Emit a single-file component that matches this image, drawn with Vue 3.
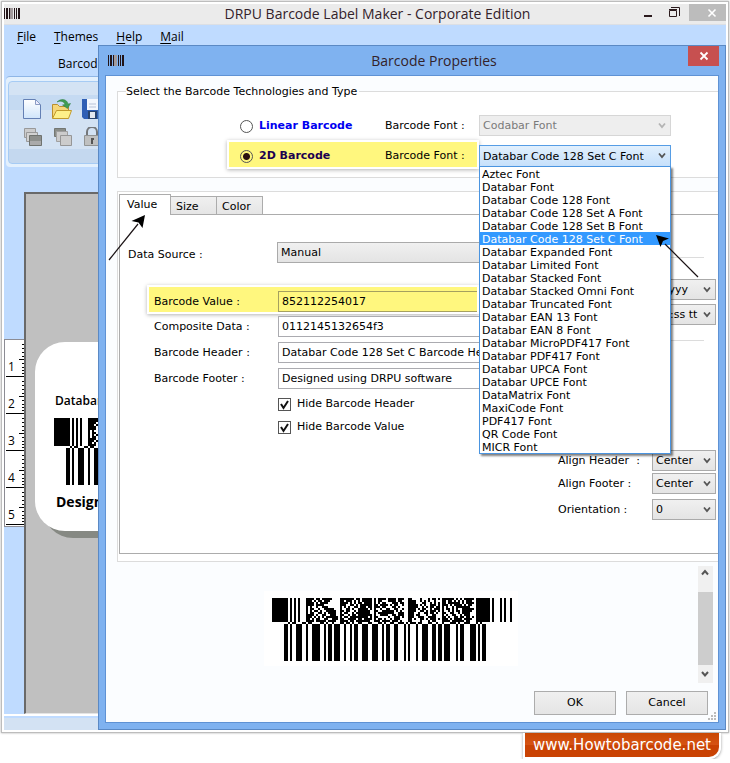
<script setup>
import { ref } from 'vue'

const fonts = [
  'Aztec Font', 'Databar Font', 'Databar Code 128 Font', 'Databar Code 128 Set A Font',
  'Databar Code 128 Set B Font', 'Databar Code 128 Set C Font', 'Databar Expanded Font',
  'Databar Limited Font', 'Databar Stacked Font', 'Databar Stacked Omni Font',
  'Databar Truncated Font', 'Databar EAN 13 Font', 'Databar EAN 8 Font',
  'Databar MicroPDF417 Font', 'Databar PDF417 Font', 'Databar UPCA Font',
  'Databar UPCE Font', 'DataMatrix Font', 'MaxiCode Font', 'PDF417 Font',
  'QR Code Font', 'MICR Font',
]
const kind = ref('2d')
const selected = ref('Databar Code 128 Set C Font')
const value = ref('852112254017')
const composite = ref('0112145132654f3')
const header = ref('Databar Code 128 Set C Barcode Header')
const footer = ref('Designed using DRPU software')
const hideHeader = ref(true)
const hideValue = ref(true)

// [start, width] in modules
const guards = [[0, 8], [9, 1], [11, 1], [13, 1], [102, 7], [110, 1], [114, 1], [116, 1], [119, 1]]
const linear = [
  [6, 2], [9, 1], [12, 3], [17, 1], [20, 4], [26, 1], [28, 2], [31, 3], [36, 1], [39, 1],
  [41, 2], [45, 3], [50, 3], [55, 1], [57, 2], [61, 2], [66, 1], [68, 1], [72, 1], [75, 3],
  [80, 2], [83, 2], [86, 3], [92, 1], [94, 2], [99, 3], [103, 1], [105, 2],
]
const matrix = [
  '####.##.#####... #######.##.##### #.####.####.### ##....#...#.##.# ######.#.#.#####',
  '###.#.##.###.... ##.###.#.#.##### #.##...####.##. ####..#.#.#..#.. ##.##.#.#.#.###.',
  '####.#.####..... ####.#.#.##.#### #.#.##...###.## ####...##..#.#.# ##.######.#.####',
  '####.####....... ###..##.#.###### ##.####.#.##..# #####.#.#..###.# ###.#.####.#.##.',
  '#.#..#..###..... #.#.#..##.###.## ###.##...##.#.. #####..#.#.##.## #.#..#.#######..',
  '#.##..#..#####.. #..##.#..#####.# #..#..##..##..# ####.#.##..#.### #.##.#.#..######',
  '#.#.##.#..#####. ##.##..#.######. ##..######.#.#. ####..##.#.###.# #..#.#.##.#####.',
  '#.##..##.#.####. #.##..#.#######. #.########..### ###..#..##.##.#. ##..##..#.####..',
  '####.#..##..###. ##..#.##.####### #..####..##.### ###.##...#..##.. #.#..##..#.###..',
  '###.#.#.#.###### #.##.#########.# ##.....#..###.# ###..###..####.. ##.#..##.##.##.#',
  '##.#.##..##..### ##..####.##.#### #.##.#..#.###.. ##.#..##.#.###.# ###.#.####.####.',
  '####.#####.####. ####.##.#######. ###.####.###.#. ##....#...#.##.. ####.######.##..',
]
const starts = [17, 34, 51, 68, 85]
const unit = 2
const bar = (x, y, w, h) => `M${x} ${y}h${w}v${h}h${-w}z`

function barcodePath(lead) {
  const top = unit * (12 + lead)
  let d = guards.map(([x, w]) => bar(x * unit, 0, w * unit, top)).join('')
  if (lead) d += starts.map((x) => bar(x * unit, 0, 32, lead * unit)).join('')
  matrix.forEach((row, r) => {
    row.split(' ').forEach((block, b) => {
      ;[...block].forEach((c, i) => {
        if (c === '#') d += bar((starts[b] + i) * unit, (r + lead) * unit, unit, unit)
      })
    })
  })
  for (let i = 1; i < linear.length; i++) {
    const end = linear[i - 1][0] + linear[i - 1][1]
    d += bar(end * unit, top, (linear[i][0] - end) * unit, unit)
  }
  d += linear.map(([x, w]) => bar(x * unit, top + unit, w * unit, 37)).join('')
  return d
}
const previewPath = barcodePath(0)
const labelPath = barcodePath(2)
</script>

<template>
  <div class="frame">
    <main class="stage">
      <div class="app">
        <header class="app-title">
          <svg class="logo" width="16" height="11" shape-rendering="crispEdges"><path d="M0 0h1v11H0zM2 0h2v11H2zM5 0h1v11H5zM10 0h1v11h-1zM12 0h1v11h-1zM14 0h2v11h-2z" fill="#221418" /><path d="M6 0h3v11H6z" fill="#a29a9c" /></svg>
          <h1>DRPU Barcode Label Maker - Corporate Edition</h1>
          <div class="win-buttons">
            <button aria-label="Minimize"><svg width="14" height="14"><path d="M3 8h8v2H3z" fill="#2b1a1d" /></svg></button>
            <button aria-label="Restore"><svg width="14" height="14" fill="none" stroke="#2b1a1d"><path d="M4 .5h8.500V9M2.500 3.500h7v6h-7zM2 2.500h8" /></svg></button>
            <button class="off" aria-label="Close"><svg width="14" height="14"><path d="M3.500 3.500l7 7M10.500 3.500l-7 7" stroke="#fff" stroke-width="1.600" /></svg></button>
          </div>
        </header>
        <nav class="menu">
          <a href="#"><u>F</u>ile</a><a href="#"><u>T</u>hemes</a><a href="#"><u>H</u>elp</a><a href="#"><u>M</u>ail</a>
        </nav>
        <div class="ribbon-tab">Barcode Settings</div>
        <div class="ribbon">
          <div class="ribbon-inner">
            <button aria-label="New">
              <svg width="20" height="20"><defs><linearGradient id="pg" x2="0" y2="1"><stop stop-color="#fff" /><stop offset="1" stop-color="#cfe5fb" /></linearGradient></defs><path d="M1.500.5h12l5 5v14h-17z" fill="url(#pg)" stroke="#6480b4" /><path d="M13.500.5v5h5z" fill="#eef" stroke="#8a9cc4" /></svg>
            </button>
            <button aria-label="Open">
              <svg width="20" height="20"><path d="M.5 19V5.500h5l2 2h9V19z" fill="#f5d77a" stroke="#b98f2e" /><path d="M.5 19.500l4-8h15l-3 8z" fill="#fdf08a" stroke="#c19a2c" /><path d="M5 3C9-1 15 0 16 5l2.500-.5-3 5-5-3.500 2.500-.5C12 2 8 1.500 5 3z" fill="#3f9d54" stroke="#2a7a3c" stroke-width=".5" /></svg>
            </button>
            <button aria-label="Save">
              <svg width="20" height="20"><path d="M0 0h20v20H2l-2-2z" fill="#2f5fb5" /><path d="M5 0h11v11H5z" fill="#f4f7fd" /><path d="M7 5h7M7 8h7" stroke="#b9c3d8" /><path d="M6 12h9v8H6z" fill="#28446f" /><path d="M8 13h5v6H8z" fill="#e4e8ef" /></svg>
            </button>
            <button aria-label="Send to back">
              <svg width="20" height="20"><path d="M2.500 1.500h11v9h-11z" fill="#ccc" stroke="#999" /><path d="M4.500 5.500h11v9h-11z" fill="#d2d2d2" stroke="#999" /><path d="M7.500 8.500h12v10h-12z" fill="#8d8f8c" stroke="#70736f" /><path d="M8 14h11v4H8z" fill="#aaa" /></svg>
            </button>
            <button aria-label="Bring to front">
              <svg width="20" height="20"><path d="M2.500 1.500h11v8h-11z" fill="#8a8d88" stroke="#747772" /><path d="M4.500 4.500h11v10h-11z" fill="#ccc" stroke="#a0a0a0" /><path d="M8.500 8.500h11v10h-11z" fill="#ccc" stroke="#969696" /></svg>
            </button>
            <button aria-label="Lock">
              <svg width="20" height="20"><path d="M5 9V5a5 5 0 0 1 10 0v4" fill="none" stroke="#74777a" stroke-width="2" /><path d="M2.500 8.500h15v10h-15z" fill="#bfc0c0" stroke="#929494" /><path d="M9 11h3v2h-1v4H9v-4z" fill="#555" /></svg>
            </button>
          </div>
        </div>
        <div class="work">
          <div class="rail">
            <div class="ruler">
              <div v-for="n in 5" :key="n" class="inch">
                <span>{{ n }}</span>
                <svg width="5" height="36" stroke="#000" shape-rendering="crispEdges"><path d="M3 4.500h2M3 8.500h2M3 12.500h2M3 16.500h2M0 19.500h5M3 23.500h2M3 27.500h2M3 30.500h2M3 33.500h2" /></svg>
              </div>
            </div>
          </div>
          <div class="canvas">
            <div class="card">
              <p class="card-head">Databar Code 128 Set C</p>
              <svg width="240" height="67" shape-rendering="crispEdges"><path :d="labelPath" /></svg>
              <p class="card-foot">Designed using DRPU</p>
            </div>
          </div>
        </div>
        <footer class="status"></footer>
      </div>

      <section class="dialog" aria-label="Barcode Properties">
        <header class="dlg-title">
          <svg class="logo" width="16" height="11" shape-rendering="crispEdges"><path d="M0 0h1v11H0zM2 0h2v11H2zM5 0h1v11H5zM10 0h1v11h-1zM12 0h1v11h-1zM14 0h2v11h-2z" fill="#221418" /><path d="M6 0h3v11H6z" fill="#a29a9c" /></svg>
          <h2>Barcode Properties</h2>
          <button class="close" aria-label="Close dialog"><svg width="14" height="14"><path d="M3.500 3.500l7 7M10.500 3.500l-7 7" stroke="#fff" stroke-width="1.800" /></svg></button>
        </header>

        <div class="client">
          <fieldset class="tech">
            <legend>Select the Barcode Technologies and Type</legend>
            <div class="tech-row">
              <div class="pick">
                <label class="kind"><input v-model="kind" type="radio" name="kind" value="linear" /><b>Linear Barcode</b></label>
                <label for="f1">Barcode Font :</label>
              </div>
              <div class="combo">
                <select id="f1" disabled><option>Codabar Font</option></select>
                <svg class="chev" width="8" height="8"><path d="M1 1.500l3 3.500 3-3.500" /></svg>
              </div>
            </div>
            <div class="tech-row">
              <div class="pick hl">
                <label class="kind on"><input v-model="kind" type="radio" name="kind" value="2d" /><b>2D Barcode</b></label>
                <label for="f2">Barcode Font :</label>
              </div>
              <div class="combo open">
                <select id="f2" v-model="selected"><option v-for="f in fonts" :key="f">{{ f }}</option></select>
                <svg class="chev" width="8" height="8"><path d="M1 1.500l3 3.500 3-3.500" /></svg>
                <ul class="list" role="listbox">
                  <li v-for="f in fonts" :key="f" role="option" :class="{ active: f === selected }" @click="selected = f">{{ f }}</li>
                </ul>
              </div>
            </div>
          </fieldset>

          <div class="book">
            <div class="tabs" role="tablist">
              <button role="tab" class="current">Value</button><button role="tab">Size</button><button role="tab">Color</button>
            </div>
            <div class="page">
              <div class="left">
                <div class="field source">
                  <label for="src">Data Source :</label>
                  <div class="combo"><select id="src"><option>Manual</option></select></div>
                </div>
                <div class="field hl value">
                  <label for="bv">Barcode Value :</label><input id="bv" v-model="value" type="text" />
                </div>
                <div class="field"><label for="cd">Composite Data :</label><input id="cd" v-model="composite" type="text" /></div>
                <div class="field"><label for="bh">Barcode Header :</label><input id="bh" v-model="header" type="text" /></div>
                <div class="field"><label for="bf">Barcode Footer :</label><input id="bf" v-model="footer" type="text" /></div>
                <div class="checks">
                  <label><input v-model="hideHeader" type="checkbox" /><span class="box"><svg width="13" height="13"><path d="M3 6l2.500 4L10 3" /></svg></span>Hide Barcode Header</label>
                  <label><input v-model="hideValue" type="checkbox" /><span class="box"><svg width="13" height="13"><path d="M3 6l2.500 4L10 3" /></svg></span>Hide Barcode Value</label>
                </div>
              </div>
              <div class="right">
                <hr />
                <div class="formats">
                  <div class="combo"><select aria-label="Date format"><option>d/M/yyyy</option></select><svg class="chev" width="8" height="8"><path d="M1 1.500l3 3.500 3-3.500" /></svg></div>
                  <div class="combo"><select aria-label="Time format"><option>h:mm:ss tt</option></select><svg class="chev" width="8" height="8"><path d="M1 1.500l3 3.500 3-3.500" /></svg></div>
                </div>
                <hr />
                <div class="aligns">
                  <label for="ah">Align Header&nbsp; :</label>
                  <div class="combo"><select id="ah"><option>Center</option></select><svg class="chev" width="8" height="8"><path d="M1 1.500l3 3.500 3-3.500" /></svg></div>
                  <label for="af">Align Footer :</label>
                  <div class="combo"><select id="af"><option>Center</option></select><svg class="chev" width="8" height="8"><path d="M1 1.500l3 3.500 3-3.500" /></svg></div>
                  <label for="or" class="gap">Orientation :</label>
                  <div class="combo gap"><select id="or"><option>0</option></select><svg class="chev" width="8" height="8"><path d="M1 1.500l3 3.500 3-3.500" /></svg></div>
                </div>
              </div>
            </div>
          </div>

          <div class="preview">
            <div class="preview-area">
              <div class="paper"><svg width="240" height="63" shape-rendering="crispEdges"><path :d="previewPath" /></svg></div>
            </div>
            <div class="scroll">
              <button aria-label="Scroll up"><svg class="sc" width="8" height="8"><path d="M1 5.500l3-3.500 3 3.500" /></svg></button>
              <div class="thumb"></div>
              <button aria-label="Scroll down"><svg class="sc" width="8" height="8"><path d="M1 2l3 3.500 3-3.500" /></svg></button>
            </div>
          </div>

          <div class="actions"><button>OK</button><button>Cancel</button></div>
          <svg class="grip" width="9" height="9" fill="#bcbcbc"><path d="M6 0h2v2H6zM3 3h2v2H3zM6 3h2v2H6zM0 6h2v2H0zM3 6h2v2H3zM6 6h2v2H6z" /></svg>
        </div>

        <svg class="arrow first" width="40" height="48"><path d="M1 46L30 10" stroke="#1a1214" stroke-width="1.200" /><path d="M37 1L34.500 14l-4-5.500-7-1.500z" fill="#000" /></svg>
        <svg class="arrow second" width="46" height="46"><path d="M43 43L10 10" stroke="#1a1214" stroke-width="1.200" /><path d="M1 1l13 3.500-6 2.500-2.500 6z" fill="#000" /></svg>
      </section>
    </main>
  </div>
  <a class="site" href="#">www.Howtobarcode.net</a>
</template>

<style>
body { margin: 0; background: #fff; }
</style>

<style scoped>
* { box-sizing: border-box; }
.frame {
  margin: 1px 1px 0;
  padding: 2px;
  border: 1px solid #bdbdbd;
  background: #fff;
  box-shadow: 0 0 2px #aaa;
  font: 11px/14px "DejaVu Sans", Verdana, sans-serif;
  color: #000;
}
.stage { display: grid; overflow: hidden; }
.app, .dialog { grid-area: 1 / 1; min-width: 0; }
button, input, select { font: inherit; color: inherit; margin: 0; }
svg { display: block; }

.app { display: flex; flex-direction: column; background: #bfdbff; font-family: "Open Sans", "Segoe UI", sans-serif; }
.app-title { display: flex; height: 21px; background: #ebebeb; border-bottom: 1px solid #dcdfe4; }
.app-title .logo { margin-top: 4px; flex: none; }
h1, h2 { flex: 1; margin: 0; text-align: center; font: 14px/20px "Open Sans", "Segoe UI", sans-serif; color: #33222a; white-space: nowrap; }
h1 { padding-left: 100px; }
.win-buttons { display: flex; }
.win-buttons button { width: 26px; height: 20px; padding: 0; border: 0; background: none; display: grid; place-items: center; }
.win-buttons .off { width: 37px; margin-left: 2px; padding-left: 8px; height: 17px; background: #bcbcbc; }
.menu { display: flex; gap: 18px; padding: 0 13px; height: 24px; font-size: 12px; line-height: 24px; }
.menu a { color: #000; text-decoration: none; }
.menu u { text-underline-offset: 2px; }
.ribbon-tab { height: 27px; padding-left: 54px; font-size: 12px; line-height: 30px; white-space: nowrap; }
.ribbon { height: 91px; margin-left: 2px; padding: 4px 0 4px 2px; border-top: 1px solid #8fb6e6; border-radius: 4px; background: #e3f0fd; }
.ribbon-inner {
  display: grid; grid-template-columns: repeat(3, 20px); grid-auto-rows: 20px; gap: 8px 10px;
  height: 83px; padding: 17px 13px; border: 1px solid #a6cbf4; border-radius: 4px;
  background: linear-gradient(#d4e3f4 13px, #c5daf2 13px 28px, #d3e2f3 28px 67px, #c4d8ef 67px);
}
.ribbon-inner button { padding: 0; border: 0; background: none; }
.work { flex: 1; display: flex; margin-top: 25px; border-bottom: 2px solid #fff; }
.rail { width: 20px; flex: none; padding-top: 147px; }
.ruler { border: 1px solid #8c8c94; border-right: 0; background: #fff; height: 188px; }
.inch { display: flex; justify-content: space-between; height: 37px; border-bottom: 1px solid #000; font: 12px/18px "Open Sans", sans-serif; margin-left: 1px; }
.inch span { padding: 18px 0 0 2px; }
.canvas { flex: 1; min-width: 0; padding: 148px 0 0 9px; border: solid #696969; border-width: 2px 0 0 2px; border-bottom: 1px solid #e4e4e4; background: #c0c0c0; }
.card { width: 300px; height: 189px; padding: 50px 0 0 19px; border-radius: 30px; background: #fff; box-shadow: 8px 7px 0 #868983; }
.card p { margin: 0; white-space: nowrap; font-family: "Open Sans", sans-serif; }
.card .card-head { padding-left: 1px; margin-bottom: 8px; font-size: 12px; line-height: 18px; font-weight: 600; }
.card .card-foot { padding-left: 2px; margin-top: 8px; font-size: 14px; line-height: 18px; font-weight: 700; }
.status { height: 12px; margin-top: 2px; background: #d3e2f3; }

.dialog { position: relative; margin: 41px 0 0 94px; padding: 0 6px 6px; border: 1px solid #5b89c4; background: #7fb2f0; }
.dlg-title { display: flex; height: 29px; }
.dlg-title .logo { margin: 9px 0 0 3px; flex: none; }
.dlg-title h2 { line-height: 29px; padding-left: 56px; }
.close { width: 31px; height: 20px; padding: 0; border: 0; background: #c75050; display: grid; place-items: center; }
.client { position: relative; border: 1px solid #5f92d4; background: #fbfdff; padding-top: 8px; }
.tech { margin: 0 0 0 11px; padding: 15px 0 10px 111px; border: 1px solid #dcdcdc; border-right: 0; background: #fff; min-width: 0; }
.tech legend { margin-left: -103px; padding: 0 2px 0 0; height: 14px; line-height: 15px; }
.tech-row { display: flex; align-items: center; gap: 2px; height: 25px; }
.tech-row + .tech-row { margin-top: 4px; align-items: flex-end; }
.pick { width: 248px; height: 25px; padding: 1px 0 0 11px; display: grid; grid-template-columns: 145px 1fr; align-items: center; }
.pick.hl { padding-top: 3px; }
.hl { background: #fff77e; box-shadow: 0 0 0 2px #fff, 0 1px 4px 2px rgba(0, 0, 0, .3); }
.kind { display: flex; align-items: center; gap: 6px; color: #0000f0; }
.kind.on { color: #1c0050; }
input[type="radio"] { appearance: none; width: 13px; height: 13px; border: 1px solid #555; border-radius: 50%; background: #fff; }
input[type="radio"]:checked { background: radial-gradient(circle, #2a1010 0 3px, #fff77e 4px); }
.combo { position: relative; width: 192px; }
.combo select {
  display: block; appearance: none; width: 100%; height: 21px; padding: 1px 14px 0 3px;
  border: 1px solid #aaa; border-radius: 0; background: linear-gradient(#f0f0f0, #e4e4e4); outline: 0;
}
.combo select:disabled { opacity: 1; color: #7a7a7a; border-color: #d6d6d6; background: #eee; }
.combo.open select { height: 22px; border-color: #569de5; background: linear-gradient(#e2f0fd, #c6e0fb); }
.chev { position: absolute; right: 5px; top: 7px; pointer-events: none; fill: none; stroke: #555; stroke-width: 1.8px; }
select:disabled + .chev { stroke: #b4b4b4; }
.list {
  position: absolute; z-index: 3; top: 21px; left: 0; width: 100%; margin: 0; padding: 0; list-style: none;
  border: 1px solid #4a94e0; background: #fff; box-shadow: 2px 2px 2px rgba(0, 0, 0, .5);
}
.list li { height: 13px; padding-left: 2px; line-height: 15px; white-space: nowrap; cursor: default; }
.list .active { background: #3399ff; color: #fff; }

.book { margin: 13px 0 0 11px; padding: 2px 0 7px 1px; border: 1px solid #dcdcdc; border-right: 0; background: #fff; }
.tabs { display: flex; align-items: flex-end; height: 20px; }
.tabs button { height: 18px; padding: 2px 7px 0 5px; border: 1px solid #acacac; border-bottom: 0; background: linear-gradient(#f0f0f0, #e5e5e5); text-align: left; min-width: 47px; margin-right: -1px; line-height: 14px; }
.tabs .current { width: 52px; height: 21px; margin-bottom: -1px; padding: 0 7px; background: #fff; z-index: 1; }
.page { display: grid; grid-template-columns: 1fr 158px; gap: 13px; padding: 27px 2px 33px 8px; border: solid #acacac; border-width: 1px 0 1px 1px; }
.field { display: grid; grid-template-columns: 124px 1fr; align-items: center; height: 21px; margin: 0 0 5px 26px; }
.field.source { grid-template-columns: 149px 1fr; margin: 0 0 24px; }
.field.source label { padding-top: 4px; }
.field .combo { width: auto; }
.field input { height: 21px; min-width: 0; padding: 0 3px; border: 1px solid #ababb0; background: #fff; outline: 0; }
.field.value { width: 328px; height: 25px; padding-left: 5px; margin: 0 0 4px 21px; }
.field.value label { padding-top: 4px; }
.field.value input { align-self: end; background: transparent; border-color: #a5a05f; border-right: 0; }
.checks { display: flex; flex-direction: column; gap: 9px; margin: 8px 0 0 150px; }
.checks label { display: flex; align-items: center; gap: 6px; }
.checks input { position: absolute; opacity: 0; width: 13px; height: 13px; }
.box { width: 13px; height: 13px; border: 1px solid #555; background: #fff; }
.box svg { margin: -1px; fill: none; stroke: #111; stroke-width: 2px; visibility: hidden; }
input:checked + .box svg { visibility: visible; }
.right hr { margin: 0 12px 0 0; border: 0; border-top: 1px solid #dcdcdc; }
.right { padding-top: 15px; }
.formats { display: flex; flex-direction: column; gap: 4px; align-items: flex-end; margin: 21px 0 15px; }
.formats .combo { width: 82px; }
.aligns { display: grid; grid-template-columns: 94px 64px; gap: 2px 0; align-items: center; margin-top: 109px; }
.aligns .combo { width: 64px; }
.aligns .gap { margin-top: 3px; }

.preview { display: flex; padding: 4px 5px 0 0; }
.preview-area { flex: 1; display: flex; justify-content: center; padding: 25px 22px 0 0; }
.paper { width: 254px; height: 75px; padding: 7px 0 0 8px; background: #fff; }
.scroll { display: flex; flex-direction: column; width: 15px; height: 117px; background: #f0f0f0; }
.scroll button { height: 18px; padding: 0 0 0 3px; border: 0; background: none; }
.scroll button:first-child { height: 26px; padding-bottom: 12px; }
.sc { fill: none; stroke: #555; stroke-width: 2px; }
.thumb { flex: 1; background: #cdcdcd; }
.actions { display: flex; justify-content: flex-end; gap: 10px; padding: 8px 10px 7px; }
.actions button { width: 82px; height: 24px; padding: 0; border: 1px solid #acacac; background: linear-gradient(#f0f0f0, #e5e5e5); }
.grip { position: absolute; right: 1px; bottom: 1px; }

.arrow { position: absolute; z-index: 4; pointer-events: none; }
.first { left: 9px; top: 168px; }
.second { right: 24px; top: 188px; }

.site {
  display: block; width: fit-content; margin: 0 9px 0 auto; padding: 0 8px;
  border: 2px solid #fff; border-top: 0; border-bottom-right-radius: 12px;
  background: linear-gradient(#c94803, #d65314 12px, #c94203 12px); box-shadow: 0 1px 3px #999;
  font: 15px/24px "DejaVu Sans", Verdana, sans-serif; color: #fff; text-decoration: none;
}
</style>
